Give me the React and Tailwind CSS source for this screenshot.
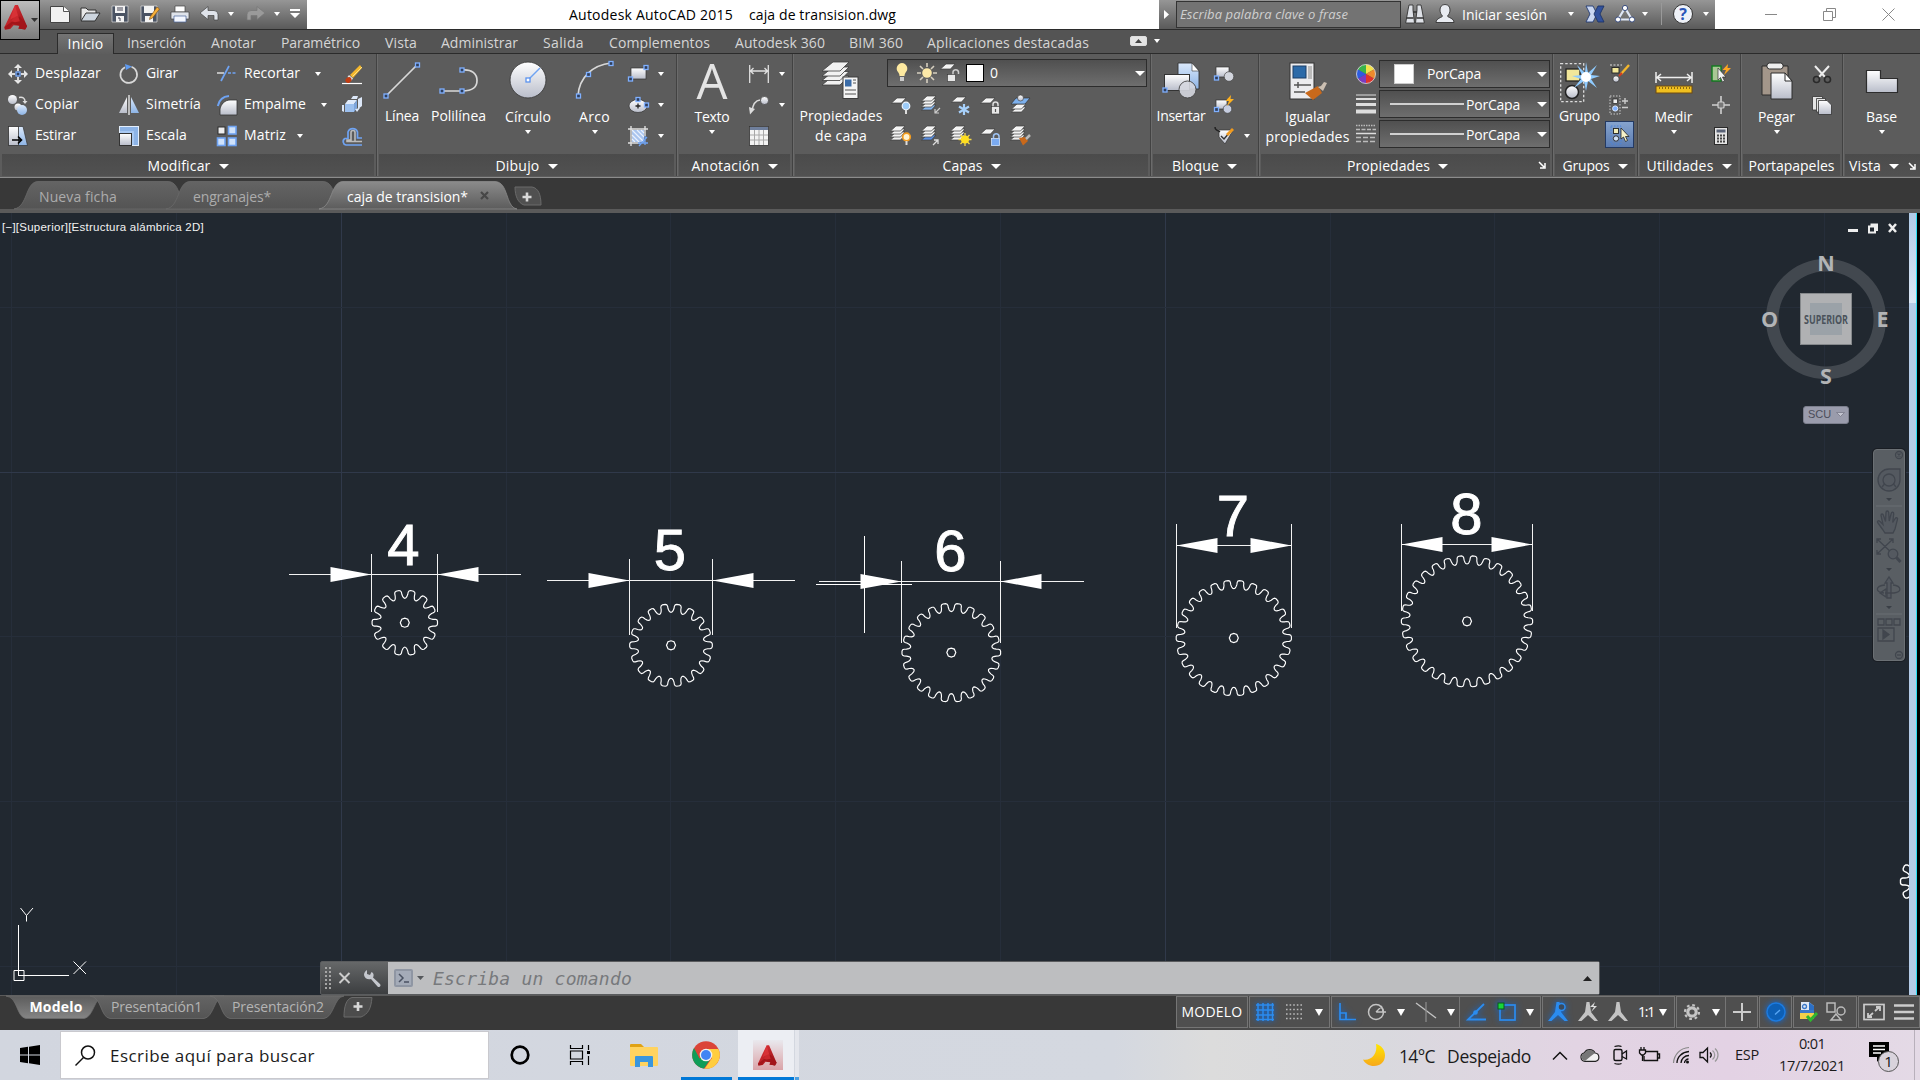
import React, { useLayoutEffect, useRef, useState } from "react";

/* Text run whose tracking is adjusted so that it spans `w` pixels. */
function T({ w, className = "", children }) {
  const ref = useRef(null);
  const [ls, setLs] = useState(0);
  useLayoutEffect(() => {
    if (!w) return;
    const n = ref.current.getBoundingClientRect().width;
    setLs((w - n) / String(children).length);
  }, []);
  return (
    <span ref={ref} className={`inline-block shrink-0 whitespace-pre ${className}`} style={{ letterSpacing: `${ls}px` }}>
      {children}
    </span>
  );
}

function Ico({ w = 20, h = 20, className = "", children }) {
  return (
    <svg width={w} height={h} viewBox={`0 0 ${w} ${h}`} className={`block shrink-0 overflow-visible ${className}`} fill="none">
      {children}
    </svg>
  );
}

const Caret = ({ w = 6, h = 4, className = "", fill = "#fff" }) => (
  <Ico w={w} h={h} className={className}>
    <path d={`M0 0H${w}L${w / 2} ${h}Z`} fill={fill} />
  </Ico>
);

const Node = ({ x, y }) => <rect x={x - 2} y={y - 2} width="4" height="4" fill="#2f3f5c" stroke="#7fb0ff" strokeWidth="1.3" />;

const Defs = () => (
  <svg width="0" height="0" className="absolute">
    <defs>
      <linearGradient id="silver" x1="0" y1="0" x2="0" y2="1">
        <stop offset="0" stopColor="#fff" />
        <stop offset="1" stopColor="#b9bdca" />
      </linearGradient>
      <linearGradient id="blue" x1="0" y1="0" x2="0" y2="1">
        <stop offset="0" stopColor="#dbe9fb" />
        <stop offset="1" stopColor="#8db4e6" />
      </linearGradient>
      <linearGradient id="tabOff" x1="0" y1="0" x2="0" y2="1">
        <stop offset="0" stopColor="#646464" />
        <stop offset="1" stopColor="#545454" />
      </linearGradient>
      <linearGradient id="tabOn" x1="0" y1="0" x2="0" y2="1">
        <stop offset="0" stopColor="#8b8b8b" />
        <stop offset="1" stopColor="#5c5c5c" />
      </linearGradient>
      <linearGradient id="tabDn" x1="0" y1="0" x2="0" y2="1">
        <stop offset="0" stopColor="#5c5c5c" />
        <stop offset="1" stopColor="#858585" />
      </linearGradient>
      <linearGradient id="red" x1="0" y1="0" x2="1" y2="1">
        <stop offset="0" stopColor="#e8353b" />
        <stop offset="1" stopColor="#8f0d12" />
      </linearGradient>
      <linearGradient id="moon" x1="0" y1="0" x2="0" y2="1">
        <stop offset="0" stopColor="#ffe600" />
        <stop offset="1" stopColor="#f7a81b" />
      </linearGradient>
    </defs>
  </svg>
);

const LogoA = ({ w = 24, h = 26 }) => (
  <svg width={w} height={h} viewBox="0 0 24 26" className="block shrink-0">
    <path d="M11 0h3l9.500 22-2 3.500-7-1 1-3-6-.5-3.500 4-5.500.5L0 23Z" fill="url(#red)" />
    <path d="M0 23 14 13l2-1 7.500 10-2 3.500-7-1 2-3-8-2-4 5.500-4 .5Z" fill="#a3151a" />
    <path d="M7 17 13 8l3 9-5 1Z" fill="#c9272c" />
    <path d="M11 0 6 15l8-4Z" fill="#e0383c" opacity=".7" />
  </svg>
);

/* ---------- small ribbon icons ---------- */
const Sheet = ({ x = 0, y = 0, f = "#f4f4f4" }) => (
  <path d={`M${x + 5} ${y}h9l-4.500 5h-10Z`} fill={f} stroke="#3c3c3c" strokeWidth=".7" />
);
const Stack = ({ x = 0, y = 0, last = "#f0f0f0" }) => (
  <>
    <Sheet x={x} y={y + 9} f={last} />
    <Sheet x={x} y={y + 6} />
    <Sheet x={x} y={y + 3} />
    <Sheet x={x} y={y} />
  </>
);

const I = {
  move: (
    <Ico>
      <path d="M10 0l4 4H6ZM10 20l-4-4h8ZM0 10l4-4v8ZM20 10l-4 4V6Z" fill="#e8e8e8" />
      <path d="M10 3v14M3 10h14" stroke="#d8d8d8" strokeWidth="2" />
      <rect x="7" y="7" width="6" height="6" fill="#555" />
      <Node x={10} y={10} />
    </Ico>
  ),
  copy: (
    <Ico>
      <circle cx="4.500" cy="4.500" r="4.500" fill="url(#silver)" />
      <circle cx="10" cy="12" r="3.500" fill="url(#silver)" />
      <circle cx="14" cy="15" r="5" fill="url(#blue)" />
      <path d="M11 2.500c4-1 6 1 6 4" stroke="#ddd" strokeWidth="1.500" />
      <path d="M14.500 6h5L17 9Z" fill="#ddd" />
    </Ico>
  ),
  stretch: (
    <Ico>
      <path d="M9 .5h6l4.500 19H9Z" fill="url(#blue)" stroke="#333" strokeWidth=".7" />
      <rect x=".5" y=".5" width="10" height="19" fill="url(#silver)" stroke="#333" strokeWidth=".8" />
      <path d="M4 14h9m-3-3.500 3.500 3.500-3.500 3.500" stroke="#000" strokeWidth="1.600" />
    </Ico>
  ),
  rotate: (
    <Ico>
      <path d="M12.500 2.800A8.300 8.300 0 1 1 6 3.200" stroke="#d8d8d8" strokeWidth="1.700" />
      <path d="M6 0l7 2.500L7 6Z" fill="#5f9bf0" />
    </Ico>
  ),
  mirror: (
    <Ico>
      <path d="M8 2v16H0Z" fill="url(#silver)" />
      <path d="M12 2v16h8Z" fill="url(#blue)" />
      <path d="M10 0v20" stroke="#ddd" strokeWidth="1.500" />
    </Ico>
  ),
  scale: (
    <Ico>
      <rect x=".5" y=".5" width="19" height="19" fill="#a9c9f2" stroke="#e3eefc" />
      <path d="M1 1h18v18h-4V5H1Z" fill="#7ba6df" opacity=".6" />
      <rect x=".5" y="7.500" width="12" height="12" fill="url(#silver)" stroke="#333" />
    </Ico>
  ),
  trim: (
    <Ico>
      <path d="M0 9h7" stroke="#ddd" strokeWidth="1.500" />
      <path d="M11 9h9" stroke="#6fa3f2" strokeWidth="1.500" strokeDasharray="3 1.500" />
      <path d="M4 17 12 2" stroke="#6fa3f2" strokeWidth="1.700" />
    </Ico>
  ),
  fillet: (
    <Ico>
      <path d="M3 20V14C4 9 8 5 13 5h7v15Z" fill="url(#silver)" stroke="#333" strokeWidth=".8" />
      <path d="M.8 11C2 5 6 1.500 12 1" stroke="#6fa3f2" strokeWidth="2" />
    </Ico>
  ),
  array: (
    <Ico>
      <rect x="1" y="1" width="7" height="7" fill="#eee" stroke="#2c2c2c" />
      {[[11.5, 0.5], [0.5, 12], [11.5, 12]].map(([x, y]) => (
        <rect key={x + "-" + y} x={x} y={y} width="7.500" height="7.500" fill="#cfe2fb" stroke="#6fa3f2" strokeWidth="1.600" />
      ))}
    </Ico>
  ),
  erase: (
    <Ico>
      <path d="M0 19.500h20" stroke="#fff" strokeWidth="1.200" />
      <path d="M8 11 18 1l2 3L11 14Z" fill="#f5b72c" />
      <path d="M10.500 12.500 20 3" stroke="#fbe18a" strokeWidth="1" />
      <path d="M7 11l4 3.500-1.500 2-4-3.500Z" fill="#e9e9e9" />
      <ellipse cx="6.500" cy="16" rx="3.200" ry="2.600" transform="rotate(-35 6.500 16)" fill="#c23c12" />
    </Ico>
  ),
  explode: (
    <Ico>
      <path d="M3 9l3-4h9l-3 4Z" fill="#dfeafb" />
      <path d="M3 9h9v8H3Z" fill="#9bbfee" />
      <path d="M12 9l3-4v8l-3 4Z" fill="#7ca5dd" />
      <path d="M0 10h2v7l-2-1ZM9 4l2-3h5l-1 3ZM16 4l4-2v9l-4 3ZM13 14l5-1-3 4Z" fill="#dce7f8" />
    </Ico>
  ),
  offset: (
    <Ico>
      <path d="M20 19H4a3.500 3.500 0 0 1-1-6.500h3V6a5 5 0 0 1 9.500 0v6h4.500" stroke="#6fa3f2" strokeWidth="1.700" />
      <path d="M20 15.500H5V14h4V6.500a2 2 0 0 1 4 0V15" stroke="#bbb" strokeWidth="1.600" />
    </Ico>
  ),
  rect: (
    <Ico>
      <rect x="3" y="4" width="15" height="11" fill="url(#silver)" stroke="#333" strokeWidth=".7" />
      <Node x={18} y={3.5} />
      <Node x={2.5} y={15} />
    </Ico>
  ),
  ellipse: (
    <Ico>
      <ellipse cx="10" cy="11" rx="9" ry="6.500" fill="url(#silver)" stroke="#333" strokeWidth=".7" />
      <path d="M10 8.500v5M7.500 11h5" stroke="#222" strokeWidth="1.300" />
      <Node x={10} y={4.5} />
      <Node x={18.5} y={10} />
    </Ico>
  ),
  hatch: (
    <Ico>
      <rect x="4" y="4" width="12" height="12" fill="#a9c4ee" />
      <path d="M4 4 16 16M4 9l7 7M9 4l7 7M4 13l3 3M13 4l3 3" stroke="#e9f1fd" strokeWidth="1.200" />
      <path d="M0 3h20M0 17h12M3 0v20M17 0v10" stroke="#e0e0e0" strokeWidth="1.400" />
      <path d="M10 17h10M17 10v9M11 20l8-9" stroke="#6fa3f2" strokeWidth="1.300" />
    </Ico>
  ),
  dim: (
    <Ico>
      <path d="M.7 1v18M19.300 1v18M1 7h18M4.500 4 1.500 7l3 3M15.500 4l3 3-3 3" stroke="#e0e0e0" strokeWidth="1.300" />
    </Ico>
  ),
  leader: (
    <Ico>
      <path d="M3 16C4 9 6 5.500 11 5" stroke="#ddd" strokeWidth="1.500" />
      <path d="M0 12l1 7.500L6 14Z" fill="#ddd" />
      <circle cx="15.500" cy="5.500" r="4" fill="url(#silver)" stroke="#333" strokeWidth=".6" />
    </Ico>
  ),
  table: (
    <Ico>
      <rect x=".5" y=".5" width="19" height="19" fill="#f3f3f3" stroke="#333" strokeWidth=".8" />
      <rect x="1" y="1" width="18" height="3" fill="#6f7f9c" />
      <path d="M1 9h18M1 14h18M5.500 4v15M10 4v15M14.500 4v15" stroke="#a8a8a8" />
    </Ico>
  ),
  layOff: (
    <Ico>
      <Sheet x={1} y={3} />
      <circle cx="15" cy="11" r="3.800" fill="#9ccbf8" stroke="#eef6ff" strokeWidth="1.200" />
      <path d="M15 15v4" stroke="#ddd" strokeWidth="2" />
    </Ico>
  ),
  layIso: (
    <Ico>
      <Stack x={1} y={1} last="#86b6ee" />
      <path d="M19 13l-5 5m0-4v4h4" stroke="#ccc" strokeWidth="1.200" />
    </Ico>
  ),
  layFreeze: (
    <Ico>
      <Sheet x={1} y={2} />
      <path d="M13 9v11M8 11.500l10 6M8 17.500l10-6" stroke="#a7d0fa" strokeWidth="2.200" />
    </Ico>
  ),
  layLock: (
    <Ico>
      <Sheet x={0} y={3} />
      <path d="M12 12V9.500a2.500 2.500 0 0 1 5 0V12" stroke="#ddd" strokeWidth="1.500" />
      <rect x="10.500" y="11.500" width="8" height="7.500" fill="#e8e8e8" stroke="#333" strokeWidth=".6" />
      <path d="M14.500 14v3" stroke="#555" strokeWidth="1.200" />
    </Ico>
  ),
  layMake: (
    <Ico>
      <Sheet x={1} y={12} />
      <Sheet x={1} y={9} />
      <path d="M5 3h14l-5 6H0Z" fill="#7db0ec" stroke="#333" strokeWidth=".7" />
      <circle cx="9.500" cy="3" r="3" fill="url(#silver)" stroke="#333" strokeWidth=".6" />
    </Ico>
  ),
  layOn: (
    <Ico>
      <Stack />
      <circle cx="15.500" cy="11" r="3.800" fill="#fff3d0" stroke="#f39c1f" strokeWidth="1.700" />
      <path d="M15.500 15v4" stroke="#ddd" strokeWidth="2" />
    </Ico>
  ),
  layUniso: (
    <Ico>
      <Stack x={1} last="#5b8fe0" />
      <path d="M12 19l5-5m-4 0h4v4" stroke="#ddd" strokeWidth="1.300" />
    </Ico>
  ),
  layThaw: (
    <Ico>
      <Stack />
      <path d="M14 7v13M7.500 13.500h13M9.500 9l9 9M18.500 9l-9 9" stroke="#f6d94a" strokeWidth="1.300" />
      <circle cx="14" cy="13.500" r="4" fill="#ffdf1f" />
    </Ico>
  ),
  layUnlock: (
    <Ico>
      <Sheet x={0} y={3} />
      <path d="M12.500 12V10a2.800 2.800 0 0 1 5.500 0v2" stroke="#9fc4f5" strokeWidth="1.500" />
      <rect x="10.500" y="12.500" width="8" height="7" fill="#7aaaf0" stroke="#cfe2fb" strokeWidth=".8" />
    </Ico>
  ),
  layMatch: (
    <Ico>
      <Stack />
      <path d="M8 12l6-1 3 4-5 4.500Z" fill="#c9691b" />
      <path d="M15 13l4-4" stroke="#b9b9b9" strokeWidth="2.500" />
    </Ico>
  ),
  blkCreate: (
    <Ico>
      <rect x="2" y="3" width="13" height="10" fill="url(#silver)" stroke="#333" strokeWidth=".7" />
      <circle cx="15" cy="12.500" r="4.800" fill="#d2d5dd" stroke="#444" strokeWidth=".7" />
      <Node x={2.5} y={14} />
    </Ico>
  ),
  blkEdit: (
    <Ico>
      <rect x="2" y="5" width="11" height="9" fill="url(#silver)" stroke="#333" strokeWidth=".7" />
      <circle cx="13.500" cy="14" r="4.300" fill="#c6cde0" stroke="#444" strokeWidth=".7" />
      <Node x={2.5} y={14.5} />
      <path d="M17 0 11.500 6H15l-2 5L20 4h-3.500Z" fill="#ffb21f" />
    </Ico>
  ),
  blkAttr: (
    <Ico>
      <path d="M5 4h11l2 2-7 12-6-7Z" fill="url(#silver)" stroke="#333" strokeWidth=".7" />
      <path d="M1 1c0 4 3 3 5 5" stroke="#222" strokeWidth="1.400" />
      <path d="M7 10l3 3 6-7" stroke="#333" strokeWidth="1.400" />
      <path d="M12 8l6-6 2 2-6 6Z" fill="#f19a1d" />
    </Ico>
  ),
  grpEdit: (
    <Ico>
      <path d="M1 1h12" stroke="#ddd" strokeDasharray="2 1.500" />
      <rect x="3" y="3.500" width="7" height="5.500" fill="#f2e79a" stroke="#222" strokeWidth=".9" />
      <circle cx="7" cy="15" r="3.200" fill="url(#silver)" stroke="#222" strokeWidth=".7" />
      <path d="M12 10 20 1" stroke="#f2b62c" strokeWidth="2.400" />
      <path d="M10 12l3-3" stroke="#d33b1e" strokeWidth="2" />
    </Ico>
  ),
  grpAdd: (
    <Ico>
      <rect x="1" y="1" width="10" height="18" stroke="#ccc" strokeDasharray="1.500 1.500" />
      <rect x="4" y="4" width="4.500" height="4.500" fill="#eee" stroke="#222" strokeWidth=".7" />
      <circle cx="6.200" cy="13.500" r="2.600" fill="#7fb0ff" stroke="#dce9fc" />
      <path d="M13 6h6M16 3v6M13 12.500h6" stroke="#ccc" strokeWidth="1.400" />
    </Ico>
  ),
  grpSel: (
    <Ico>
      <rect x="1" y="1" width="10" height="18" stroke="#4b82d8" strokeDasharray="1.500 1.500" />
      <rect x="3.500" y="3.500" width="5" height="5" fill="#f2eeb9" stroke="#222" strokeWidth=".9" />
      <circle cx="6" cy="13.500" r="2.700" fill="#cfe0f7" stroke="#222" strokeWidth=".9" />
      <path d="M11 3v11l2.500-2 2 4.500 2-1-2-4h3.500Z" fill="#f7f3ca" stroke="#222" strokeWidth=".8" />
    </Ico>
  ),
  selAll: (
    <Ico>
      <rect x="1" y="2" width="9" height="15" fill="#a9c795" stroke="#0f7a1d" strokeWidth="1.400" />
      <path d="M7 4v12l2.500-2.500 2 4.500 2-1-2-4h3.500Z" fill="#f1f1f1" stroke="#333" strokeWidth=".7" />
      <path d="M17 0 11.500 6H15l-2 5L20 4h-3.500Z" fill="#ffa51f" />
    </Ico>
  ),
  point: (
    <Ico>
      <path d="M10 1v18M1 10h18" stroke="#d0d0d0" strokeWidth="1.600" />
      <rect x="7" y="7" width="6" height="6" rx="1" stroke="#d0d0d0" strokeWidth="1.200" fill="#777" />
    </Ico>
  ),
  calc: (
    <Ico>
      <rect x="3.500" y="1.500" width="13" height="17" fill="#e4e4e4" stroke="#2b2b2b" />
      <rect x="5.500" y="3.500" width="9" height="3" fill="#5a6377" />
      <path d="M6 9.500h8.500M6 12.500h8.500M6 15.500h8.500" stroke="#444" strokeWidth="1.800" strokeDasharray="2 1" />
    </Ico>
  ),
  cut: (
    <Ico>
      <path d="M3 2l10 11M17 2 7 13" stroke="#eee" strokeWidth="2" />
      <circle cx="4.500" cy="15.500" r="3" stroke="#2a2a2a" strokeWidth="1.600" />
      <circle cx="15.500" cy="15.500" r="3" stroke="#2a2a2a" strokeWidth="1.600" />
    </Ico>
  ),
  copyDoc: (
    <Ico>
      <path d="M.5 1.500h10V15H.5Z" fill="#e4e4e4" stroke="#333" strokeWidth=".8" />
      <path d="M4.500 3.500h9V17h-9Z" fill="#e4e4e4" stroke="#333" strokeWidth=".8" />
      <path d="M6.500 5.500H15l4.500 4.500v9.500h-13Z" fill="url(#silver)" stroke="#333" strokeWidth=".8" />
    </Ico>
  ),
};

/* ---------- large ribbon icons ---------- */
const B = {
  line: (
    <Ico w={38} h={38}>
      <path d="M3 34 34 3" stroke="#d8d8d8" strokeWidth="1.700" />
      <Node x={3} y={34} />
      <Node x={34.5} y={3} />
    </Ico>
  ),
  poly: (
    <Ico w={38} h={38}>
      <path d="M2 29h21M22 8c10-1 15 4 15 10.500S33 29 22 29" stroke="#d8d8d8" strokeWidth="1.700" />
      <Node x={2} y={29} />
      <Node x={22} y={29} />
      <Node x={22} y={8} />
    </Ico>
  ),
  circle: (
    <Ico w={38} h={38}>
      <circle cx="19" cy="18" r="18" fill="url(#silver)" stroke="#3a3a3a" strokeWidth=".9" />
      <path d="M19 18 31 6" stroke="#6fa3f2" strokeWidth="1.500" />
      <rect x="17" y="16" width="4" height="4" fill="#fff" stroke="#5b93ee" strokeWidth="1.300" />
    </Ico>
  ),
  arc: (
    <Ico w={38} h={38}>
      <path d="M2 34C3 15 17 3 35 1" stroke="#d8d8d8" strokeWidth="1.700" />
      <Node x={2.5} y={34} />
      <Node x={12.5} y={12.5} />
      <Node x={35} y={1.5} />
    </Ico>
  ),
  layers: (
    <Ico w={38} h={38}>
      {[14, 9.5, 5, 0].map((y) => (
        <path key={y} d={`M11 ${y}h16l-9 9H0Z`} fill="#f1f1f1" stroke="#3c3c3c" strokeWidth=".8" />
      ))}
      <rect x="21" y="15" width="15" height="21.500" fill="#f4f4f4" stroke="#3c3c3c" />
      <rect x="23" y="17.500" width="6.500" height="7" fill="#3a6ca8" />
      <path d="M31 18h3M31 21h3M23 28h11M23 32h11" stroke="#888" strokeWidth="1.300" />
    </Ico>
  ),
  insert: (
    <Ico w={38} h={38}>
      <path d="M16 1h14l7 8v18H16Z" fill="url(#blue)" stroke="#333" strokeWidth=".9" />
      <path d="M30 1v8h7Z" fill="#fff" stroke="#333" strokeWidth=".6" />
      <rect x="2.500" y="12.500" width="25" height="16" fill="url(#silver)" stroke="#333" />
      <circle cx="25.500" cy="27.500" r="8.500" fill="#d5d7df" fillOpacity=".9" stroke="#444" strokeWidth=".9" />
      <Node x={3} y={28} />
    </Ico>
  ),
  match: (
    <Ico w={38} h={38}>
      <rect x="1" y="1" width="24" height="36" fill="#ececee" stroke="#333" />
      <rect x="4" y="4" width="13" height="12" fill="#2c6aa8" stroke="#1d3e66" />
      <path d="M19 4h4v13h-4Z" fill="#bbb" />
      <path d="M5 23h17M5 30h11M9 20v6" stroke="#555" strokeWidth="1.500" />
      <path d="M16 31l13-7 4 7-9 7Z" fill="#c9691b" />
      <path d="M29 25l5 4 4-8-3-1-3 4Z" fill="#cbbfb2" />
    </Ico>
  ),
  group: (
    <Ico w={40} h={42}>
      <rect x=".7" y="1.700" width="23" height="38" stroke="#ddd" strokeWidth="1.300" strokeDasharray="2.500 2" />
      <rect x="6" y="7" width="14" height="12" fill="#f2e79a" stroke="#222" strokeWidth="1.300" />
      <circle cx="12" cy="30" r="6.500" fill="url(#silver)" stroke="#222" strokeWidth="1.500" />
      <path d="M26 0l2 11 9-8-6 10 9 1-9 3 6 9-9-7-2 10-2-10-10 7 7-9-9-3 10-1-5-10 8 8Z" fill="#8fcbff" />
      <circle cx="26" cy="15" r="5" fill="#fff" />
    </Ico>
  ),
  measure: (
    <Ico w={38} h={38}>
      <path d="M1 10v11M37 10v11M2 15.500h34M6 12l-4 3.500L6 19M32 12l4 3.500-4 3.500" stroke="#eee" strokeWidth="1.500" />
      <rect x="1" y="24" width="36" height="7" fill="#f0c020" stroke="#6e4a10" />
      <path d="M4 26h31" stroke="#8d6a10" strokeWidth="2" strokeDasharray="1 2" />
    </Ico>
  ),
  paste: (
    <Ico w={32} h={38}>
      <path d="M1 4h26v29H1Z" fill="#a3968a" stroke="#2d2d2d" />
      <rect x="6" y="1" width="16" height="6" rx="2.500" fill="#eee" stroke="#2d2d2d" />
      <path d="M10 11h14l7 8v18H10Z" fill="url(#silver)" stroke="#2d2d2d" />
      <path d="M24 11v8h7Z" fill="#fff" stroke="#2d2d2d" />
    </Ico>
  ),
  base: (
    <Ico w={34} h={38}>
      <path d="M1.500 8.500h14v8h17v14h-31Z" fill="url(#silver)" stroke="#2d2d2d" strokeWidth="1.200" />
    </Ico>
  ),
};

/* ---------- ribbon building blocks ---------- */
const Panel = ({ className, title, tw, arrow, caret = true, children }) => (
  <section className={`flex h-[122px] shrink-0 flex-col border-r border-[#424242] shadow-[1px_0_0_#6b6b6b] ${className}`}>
    <div className="flex h-[100px] pt-[4px]">{children}</div>
    <div className="relative mx-[2px] flex h-[22px] items-center justify-center gap-2 bg-gradient-to-b from-[#4b4b4b] to-[#515151] pt-[2px]">
      <T w={tw}>{title}</T>
      {caret && <Caret w={10} h={5} />}
      {arrow && (
        <Ico w={7} h={7} className="absolute right-[4px] top-[8px]">
          <path d="M0 0l5 5M6 1v5H1" stroke="#fff" strokeWidth="1.500" />
        </Ico>
      )}
    </div>
  </section>
);

const Big = ({ className, icon, lines, caret, low }) => (
  <div className={`flex shrink-0 flex-col items-center pt-[4px] ${className}`}>
    <div className="flex h-[39px] items-start">{icon}</div>
    <div className={`flex flex-col items-center leading-[20px] ${caret || low ? "pt-[6px]" : "pt-[5px]"}`}>
      {lines.map(([t, w]) => (
        <T key={t} w={w} className="h-[20px]">{t}</T>
      ))}
    </div>
    {caret && <Caret className="mt-[3px]" />}
  </div>
);

const Tool = ({ icon, label, w, caret }) => (
  <div className="flex h-[31px] items-center">
    {icon}
    {label && <T w={w} className="ml-[7px] pb-[1px]">{label}</T>}
    {caret && <Caret className={caret} />}
  </div>
);

const Combo = ({ className, children }) => (
  <div className={`flex h-[28px] items-center border border-[#2c2c2c] bg-gradient-to-b from-[#505050] to-[#6e6e6e] ${className}`}>{children}</div>
);

const Ribbon = () => (
  <div className="flex h-[124px] border-b border-[#8c8c8c] bg-[#5c5c5c] text-[14px] leading-[20px] text-white">
    <Panel className="w-[377px]" title="Modificar" tw={63}>
      <div className="grid w-full grid-cols-[111px_98px_125px_20px] content-start pl-[8px]">
        <Tool icon={I.move} label="Desplazar" w={66} />
        <Tool icon={I.rotate} label="Girar" w={32} />
        <Tool icon={I.trim} label="Recortar" w={56} caret="ml-[15px]" />
        <Tool icon={I.erase} />
        <Tool icon={I.copy} label="Copiar" w={44} />
        <Tool icon={I.mirror} label="Simetría" w={55} />
        <Tool icon={I.fillet} label="Empalme" w={62} caret="ml-[15px]" />
        <Tool icon={I.explode} />
        <Tool icon={I.stretch} label="Estirar" w={41} />
        <Tool icon={I.scale} label="Escala" w={41} />
        <Tool icon={I.array} label="Matriz" w={42} caret="ml-[11px]" />
        <Tool icon={I.offset} />
      </div>
    </Panel>
    <Panel className="w-[300px]" title="Dibujo" tw={44}>
      <Big className="w-[50px]" icon={B.line} lines={[["Línea", 34]]} />
      <Big className="w-[62px] pl-px" icon={B.poly} lines={[["Polilínea", 55]]} />
      <Big className="w-[78px]" icon={B.circle} lines={[["Círculo", 46]]} caret />
      <Big className="w-[54px] pl-px" icon={B.arc} lines={[["Arco", 31]]} caret />
      <div className="pl-[7px]">
        <Tool icon={I.rect} caret="ml-[10px]" />
        <Tool icon={I.ellipse} caret="ml-[10px]" />
        <Tool icon={I.hatch} caret="ml-[10px]" />
      </div>
    </Panel>
    <Panel className="w-[116px]" title="Anotación" tw={68}>
      <Big
        className="w-[70px]"
        icon={<span className="font-['Open_Sans'] text-[49px] leading-[37px] text-[#e4e4e4]">A</span>}
        lines={[["Texto", 35]]}
        caret
      />
      <div className="pl-[2px]">
        <Tool icon={I.dim} caret="ml-[10px]" />
        <Tool icon={I.leader} caret="ml-[10px]" />
        <Tool icon={I.table} />
      </div>
    </Panel>
    <Panel className="w-[358px]" title="Capas" tw={40}>
      <Big className="w-[94px] pl-[2px]" icon={B.layers} lines={[["Propiedades", 83], ["de capa", 52]]} />
      <div>
        <Combo className="mt-[1px] w-[260px]">
          <Ico w={14} h={22} className="ml-[7px]">
            <path d="M7 1a5.500 5.500 0 0 1 4 9c-1 1.500-1.500 2.500-1.500 4h-5c0-1.500-.5-2.500-1.500-4A5.500 5.500 0 0 1 7 1Z" fill="#fde9a0" />
            <path d="M5 15h4v4H5Z" fill="#ccc" />
          </Ico>
          <Ico w={20} h={20} className="ml-[8px]">
            <path d="M10 0v4M10 16v4M0 10h4M16 10h4M3 3l3 3M14 14l3 3M17 3l-3 3M6 14l-3 3" stroke="#d6cfc0" strokeWidth="1.600" />
            <circle cx="10" cy="10" r="4.800" fill="#fde9a8" />
          </Ico>
          <Ico w={20} h={20} className="ml-[3px]">
            <Sheet x={1} y={1} />
            <path d="M13 12V9a2.800 2.800 0 0 1 5.500 0v2" stroke="#ccc" strokeWidth="1.500" />
            <rect x="7.500" y="11.500" width="8" height="7" fill="#e8e8e8" stroke="#333" strokeWidth=".6" />
          </Ico>
          <span className="ml-[6px] h-[18px] w-[18px] border border-black bg-white" />
          <span className="ml-[6px]">0</span>
          <Caret w={10} h={5} className="ml-auto mr-[1px]" />
        </Combo>
        <div className="grid grid-cols-[30px_30px_30px_30px_30px] pl-[4px] pt-[2px]">
          {["layOff", "layIso", "layFreeze", "layLock", "layMake", "layOn", "layUniso", "layThaw", "layUnlock", "layMatch"].map((k) => (
            <Tool key={k} icon={I[k]} />
          ))}
        </div>
      </div>
    </Panel>
    <Panel className="w-[108px]" title="Bloque" tw={47}>
      <Big className="w-[60px]" icon={B.insert} lines={[["Insertar", 49]]} />
      <div className="pl-[3px]">
        <Tool icon={I.blkCreate} />
        <Tool icon={I.blkEdit} />
        <Tool icon={I.blkAttr} caret="ml-[10px]" />
      </div>
    </Panel>
    <Panel className="w-[294px] [&>div:last-child]:pr-[16px]" title="Propiedades" tw={83} arrow>
      <Big className="w-[97px]" icon={B.match} lines={[["Igualar", 45], ["propiedades", 84]]} low />
      <div className="flex w-[23px] flex-col items-start gap-[10px] pt-[6px]">
        <Ico>
          {["#f3e24a", "#f08a2c", "#e0332b", "#7a3bc0", "#2d5be0", "#38b34a"].map((c, i) => {
            const a = ((i * 60 - 90) * Math.PI) / 180;
            const b = ((i * 60 - 30) * Math.PI) / 180;
            return <path key={c} d={`M10 10L${10 + 9.5 * Math.cos(a)} ${10 + 9.5 * Math.sin(a)}A9.500 9.500 0 0 1 ${10 + 9.5 * Math.cos(b)} ${10 + 9.5 * Math.sin(b)}Z`} fill={c} />;
          })}
          <circle cx="10" cy="10" r="9.500" stroke="#ddd" strokeWidth=".8" />
        </Ico>
        <Ico>
          <path d="M0 1h20" stroke="#ddd" />
          <path d="M0 5h20" stroke="#ddd" strokeWidth="2" />
          <path d="M0 10.500h20" stroke="#ddd" strokeWidth="3" />
          <path d="M0 17.500h20" stroke="#ddd" strokeWidth="4" />
        </Ico>
        <Ico>
          <path d="M0 1.500h20" stroke="#bbb" strokeWidth="1.500" strokeDasharray="1.500 1" />
          <path d="M0 5.500h20" stroke="#bbb" strokeWidth="1.500" strokeDasharray="4 1.500" />
          <path d="M0 9.500h20" stroke="#ddd" strokeWidth="1.500" />
          <path d="M0 13.500h20M0 17.500h20" stroke="#bbb" strokeWidth="1.500" strokeDasharray="5 2" />
        </Ico>
      </div>
      <div className="flex flex-col gap-[2px] pt-[2px]">
        <Combo className="w-[171px]">
          <span className="ml-[14px] h-[20px] w-[20px] border border-[#ccc] bg-white" />
          <T w={54} className="ml-[13px]">PorCapa</T>
          <Caret w={10} h={5} className="ml-auto mr-[2px]" />
        </Combo>
        {[0, 1].map((k) => (
          <Combo key={k} className="w-[171px]">
            <span className="ml-[10px] h-[2px] w-[74px] bg-[#d0d0d0]" />
            <T w={54} className="ml-[2px] pt-px">PorCapa</T>
            <Caret w={10} h={5} className="ml-auto mr-[2px]" />
          </Combo>
        ))}
      </div>
    </Panel>
    <Panel className="w-[85px]" title="Grupos" tw={47}>
      <Big className="w-[52px] pl-px" icon={B.group} lines={[["Grupo", 41]]} />
      <div>
        <div className="pl-[4px]">
          <Tool icon={I.grpEdit} />
          <Tool icon={I.grpAdd} />
        </div>
        <div className="mt-[1px] flex h-[27px] w-[29px] items-center justify-center border border-[#243a63] bg-gradient-to-b from-[#86a4cf] to-[#5c7cb0]">{I.grpSel}</div>
      </div>
    </Panel>
    <Panel className="w-[103px]" title="Utilidades" tw={67}>
      <Big className="w-[71px]" icon={B.measure} lines={[["Medir", 38]]} caret />
      <div className="pl-[2px]">
        <Tool icon={I.selAll} />
        <Tool icon={I.point} />
        <Tool icon={I.calc} />
      </div>
    </Panel>
    <Panel className="w-[102px]" title="Portapapeles" tw={86} caret={false}>
      <Big className="w-[71px]" icon={B.paste} lines={[["Pegar", 37]]} caret />
      <div>
        <Tool icon={I.cut} />
        <Tool icon={I.copyDoc} />
      </div>
    </Panel>
    <section className="flex h-[122px] w-[77px] flex-col">
      <div className="flex h-[100px] pt-[4px]">
        <Big className="w-[77px]" icon={B.base} lines={[["Base", 31]]} caret />
      </div>
      <div className="ml-[2px] flex h-[22px] items-center bg-gradient-to-b from-[#4b4b4b] to-[#515151] pl-[4px] pt-[2px]">
        <T w={32}>Vista</T>
        <Caret w={10} h={5} className="ml-[8px]" />
        <Ico w={7} h={7} className="ml-[10px]">
          <path d="M0 0l5 5M6 1v5H1" stroke="#fff" strokeWidth="1.500" />
        </Ico>
      </div>
    </section>
  </div>
);

/* ---------- title bar ---------- */
const TitleBar = () => (
  <header className="flex h-[29px] bg-white text-[14px] leading-[20px]">
    <div className="flex h-[29px] w-[307px] items-center bg-gradient-to-b from-[#969696] to-[#5a5a5a] pl-[50px] pb-[2px]">
      <Ico w={20} h={18}>
        <path d="M.5 1.500h13l6 5v11H.5Z" fill="#f1f1f1" stroke="#444" />
        <path d="M13.500 1.500v5h6" fill="#fff" stroke="#555" />
      </Ico>
      <Ico w={21} h={18} className="ml-[10px]">
        <path d="M1 15V3h5l2 2h8v4" fill="#e8e8e8" stroke="#333" />
        <path d="M1 16 6 8h14l-5 8Z" fill="#cdd5de" stroke="#333" />
      </Ico>
      <Ico w={18} h={18} className="ml-[10px]">
        <path d="M1 1h16v16H1Z" fill="#4a5363" stroke="#eee" strokeWidth=".6" />
        <path d="M4 1h10v7H4ZM5 11h8v6H5Z" fill="#f3f3f3" />
        <path d="M6 3h6M6 5h6M7 13h2v3" stroke="#445" />
      </Ico>
      <Ico w={20} h={18} className="ml-[11px]">
        <path d="M1 1h16v16H1Z" fill="#4a5363" stroke="#eee" strokeWidth=".6" />
        <path d="M4 1h10v7H4ZM5 11h8v6H5Z" fill="#f3f3f3" />
        <path d="M10 12 17 2l2.500 2-7 9-3 1.500Z" fill="#f7b03a" stroke="#7b4a10" strokeWidth=".6" />
      </Ico>
      <Ico w={20} h={18} className="ml-[10px]">
        <path d="M5 1h10v6H5Z" fill="#fff" stroke="#444" strokeWidth=".7" />
        <path d="M1 7h18v7H1Z" fill="#dfe3ea" stroke="#444" strokeWidth=".7" />
        <path d="M4 11h12v6H4Z" fill="#f3f7ff" stroke="#48629a" strokeWidth=".7" />
      </Ico>
      <Ico w={20} h={18} className="ml-[10px]">
        <path d="M0 8 8 1.500v4h6a4 4 0 0 1 4 4V15h-4v-4.500H8v4Z" fill="#dfe3ea" stroke="#444" strokeWidth=".7" />
      </Ico>
      <Caret className="ml-[8px]" />
      <Ico w={20} h={18} className="ml-[12px]">
        <path d="M19 8 11 1.500v4H5a4 4 0 0 0-4 4V15h4v-4.500h6v4Z" fill="#9a9a9a" stroke="#777" strokeWidth=".7" />
      </Ico>
      <Caret className="ml-[8px]" />
      <Ico w={10} h={9} className="ml-[10px]">
        <path d="M0 0h10v2H0ZM0 4h10L5 9Z" fill="#fff" />
      </Ico>
    </div>
    <div className="flex w-[852px] items-center bg-white pl-[262px] text-black">
      <T w={164}>Autodesk AutoCAD 2015</T>
      <T w={147} className="ml-[16px]">caja de transision.dwg</T>
    </div>
    <div className="flex w-[556px] items-center bg-gradient-to-b from-[#969696] to-[#5a5a5a] pb-[1px] text-white">
      <Ico w={5} h={9} className="ml-[5px]">
        <path d="M0 0l5 4.500L0 9Z" fill="#fff" />
      </Ico>
      <div className="ml-[7px] flex h-[27px] w-[225px] items-center border border-[#333] bg-[#737373] pl-[3px] text-[13px] italic text-[#cfcfcf]">
        <T w={168}>Escriba palabra clave o frase</T>
      </div>
      <Ico w={20} h={20} className="ml-[4px]">
        <path d="M4 1h4v5l1.500 13H.7L3 6ZM16 1h-4v5l-1.500 13h8.800L17 6Z" fill="#dfe2e8" stroke="#333" strokeWidth=".9" />
        <path d="M8 8h4M1.500 14h7M11.500 14h7" stroke="#333" strokeWidth="1.500" />
      </Ico>
      <Ico w={20} h={20} className="ml-[10px]">
        <path d="M10 .5c3.500 0 5 2.500 5 5.500 0 2.500-1 4.500-2.500 6 0 1.500 6.500 2 6.500 6.500H1c0-4.500 6.500-5 6.500-6.500C6 10.500 5 8.500 5 6 5 3 6.500.5 10 .5Z" fill="#e8ebf1" stroke="#333" strokeWidth=".9" />
      </Ico>
      <T w={85} className="ml-[7px] pt-px">Iniciar sesión</T>
      <Caret className="ml-[21px]" />
      <Ico w={18} h={18} className="ml-[12px]">
        <path d="M0 1h7l4 8-4 8H0l4-8Z" fill="#c9d7f2" stroke="#233a73" strokeWidth=".9" />
        <path d="M18 1h-6L8 9l4 8h6l-4-8Z" fill="#31519c" stroke="#1e3468" strokeWidth=".9" />
      </Ico>
      <Ico w={20} h={18} className="ml-[11px]">
        <path d="M10 3 3 14.500h14Z" stroke="#dfe7f6" strokeWidth="2.200" />
        <circle cx="10" cy="3" r="2.600" fill="#fff" stroke="#3a4e80" />
        <circle cx="3" cy="14.500" r="2.600" fill="#fff" stroke="#3a4e80" />
        <circle cx="17" cy="14.500" r="2.600" fill="#fff" stroke="#3a4e80" />
      </Ico>
      <Caret className="ml-[7px]" />
      <span className="ml-[13px] h-[22px] w-px bg-[#999]" />
      <span className="ml-[11px] flex h-[20px] w-[20px] items-center justify-center rounded-full border border-[#333] bg-[#eef1f7] text-[16px] font-bold leading-none text-[#2a55b8]">?</span>
      <Caret className="ml-[10px]" />
    </div>
    <div className="flex w-[205px] items-center bg-white pl-[50px] pb-[1px]">
      <span className="h-px w-[12px] bg-[#888]" />
      <Ico w={13} h={13} className="ml-[46px]">
        <path d="M.5 3.500h9v9h-9ZM3.500 3V.5h9v9H10" stroke="#888" />
      </Ico>
      <Ico w={13} h={13} className="ml-[46px]">
        <path d="M.5.5l12 12M12.500.5l-12 12" stroke="#888" />
      </Ico>
    </div>
  </header>
);

const TABS = [
  ["Inserción", 59, "w-[59px] ml-[13px]"],
  ["Anotar", 45, "w-[45px] ml-[25px]"],
  ["Paramétrico", 79, "w-[79px] ml-[25px]"],
  ["Vista", 32, "w-[32px] ml-[25px]"],
  ["Administrar", 77, "w-[77px] ml-[24px]"],
  ["Salida", 41, "w-[41px] ml-[25px]"],
  ["Complementos", 101, "w-[101px] ml-[25px]"],
  ["Autodesk 360", 90, "w-[90px] ml-[25px]"],
  ["BIM 360", 54, "w-[54px] ml-[24px]"],
  ["Aplicaciones destacadas", 162, "w-[162px] ml-[24px]"],
];

const RibbonTabs = () => (
  <nav className="flex h-[25px] items-center border-b border-t border-[#2b2b2b] bg-[#545454] pl-[57px] text-[14px] leading-[20px] text-[#d6d6d6]">
    <div className="mb-[-2px] mt-[2px] flex h-[22px] w-[57px] items-center justify-center border border-b-0 border-[#2b2b2b] bg-gradient-to-b from-[#747474] to-[#5c5c5c] pb-px text-white">
      <T w={36}>Inicio</T>
    </div>
    {TABS.map(([t, w, c]) => (
      <div key={t} className={`flex pt-[2px] ${c}`}>
        <T w={w}>{t}</T>
      </div>
    ))}
    <Ico w={17} h={10} className="mb-[2px] ml-[41px]">
      <rect x=".5" y=".5" width="16" height="9" rx="1.500" fill="#e4e4e4" stroke="#ddd" />
      <path d="M5 7l3.500-4L12 7Z" fill="#444" />
    </Ico>
    <Caret className="mb-[2px] ml-[7px]" />
  </nav>
);

/* ---------- drawing tabs ---------- */
const FileTab = ({ w, on, tw, pl, title, cls }) => (
  <div className={`relative flex h-[28px] items-center pt-[3px] ${cls} ${on ? "text-white" : "text-[#acacac]"}`}>
    <svg width={w} height="28" viewBox={`0 0 ${w} 28`} className="absolute left-0 top-0 overflow-visible">
      <path d={`M-6 28C8 26 5 1 18 .5H${w - 14}C${w} 1 ${w - 4} 26 ${w + 8} 28Z`} fill={on ? "url(#tabOn)" : "url(#tabOff)"} stroke={on ? "#8a8a8a" : "#6a6a6a"} strokeWidth=".8" />
    </svg>
    <T w={tw} className={`relative ${pl}`}>{title}</T>
    {on && (
      <Ico w={9} h={9} className="relative mb-[3px] ml-[12px]">
        <path d="M1 1l7 7M8 1 1 8" stroke="#474747" strokeWidth="2.200" />
      </Ico>
    )}
  </div>
);

const FileTabs = () => (
  <div className="flex h-[35px] flex-col bg-[#383838] text-[14px] leading-[20px]">
    <div className="flex h-[31px] items-end pl-[20px] pt-[3px]">
      <FileTab w={162} tw={78} title="Nueva ficha" pl="ml-[19px]" cls="w-[152px]" />
      <FileTab w={165} tw={78} title="engranajes*" pl="ml-[21px]" cls="w-[153px]" />
      <FileTab w={184} tw={121} title="caja de transision*" pl="ml-[22px]" cls="w-[173px]" on />
      <Ico w={28} h={20} className="mb-[3px] ml-[16px]">
        <path d="M1 1h17c6 1 9 7 9 18H10C4 17 1 10 1 1Z" fill="#505050" stroke="#6a6a6a" />
        <path d="M13 6.500v9M8.500 11h9" stroke="#d8d8d8" strokeWidth="2.600" />
      </Ico>
    </div>
    <div className="h-[4px] bg-[#5a5a5a]" />
  </div>
);

/* ---------- drawing area ---------- */
function gearPath(cx, cy, R, n) {
  const p = (2 * Math.PI) / n;
  const prof = [
    [-0.5, 8.3], [-0.4, 7.8], [-0.33, 6.6], [-0.27, 4.4], [-0.25, 2], [-0.2, 0.6], [-0.1, 0],
    [0.1, 0], [0.2, 0.6], [0.25, 2], [0.27, 4.4], [0.33, 6.6], [0.4, 7.8],
  ];
  const pts = [];
  for (let i = 0; i < n; i++)
    for (const [f, d] of prof) {
      const a = (i + f) * p;
      pts.push(`${(cx + (R - d) * Math.cos(a)).toFixed(1)} ${(cy + (R - d) * Math.sin(a)).toFixed(1)}`);
    }
  return `M${pts.join("L")}Z`;
}

const GEARS = [
  { t: "4", cx: 404.8, cy: 622.7, R: 32.7, n: 14, l: 371.5, r: 437.5, y1: 554, y2: 612, d: 574.5, from: 289, to: 521, tx: 403.5, ty: 565 },
  { t: "5", cx: 671, cy: 645.3, R: 41.3, n: 18, l: 629.5, r: 712.5, y1: 559, y2: 635, d: 580.5, from: 547, to: 795, tx: 669.8, ty: 570 },
  { t: "6", cx: 951.3, cy: 652.6, R: 49.3, n: 22, l: 901.5, r: 1000.5, y1: 561, y2: 643, d: 581.5, from: 819, to: 1084, tx: 950.3, ty: 571 },
  { t: "7", cx: 1233.8, cy: 638, R: 57.6, n: 26, l: 1176.5, r: 1291.5, y1: 524, y2: 628, d: 545.5, tx: 1233, ty: 536 },
  { t: "8", cx: 1467, cy: 621.3, R: 65.6, n: 30, l: 1401.5, r: 1532.5, y1: 524, y2: 611, d: 544.5, tx: 1466.5, ty: 533.5 },
];

const Drawing = () => (
  <svg width="1909" height="782" viewBox="0 213 1909 782" className="block" fill="none">
    {Array.from({ length: 12 }, (_, k) => {
      const x = Math.floor(341.3 + (k - 2) * 164.8) + 0.5;
      const major = (k - 2) % 5 === 0;
      return <path key={"v" + k} d={`M${x} 213V995`} stroke={major ? "#30394a" : "#262e3a"} />;
    })}
    {[307.5, 472.5, 636.5, 801.5, 966.5].map((y) => (
      <path key={y} d={`M0 ${y}H1909`} stroke={y === 472.5 ? "#30394a" : "#262e3a"} />
    ))}
    {GEARS.map((g) => {
      const inside = !g.from;
      const s = inside ? 41 : -41;
      return (
        <g key={g.t}>
          <path d={gearPath(g.cx, g.cy, g.R, g.n)} stroke="#fff" strokeWidth="1.150" />
          <path d={`M${g.cx - 4.5} ${g.cy}l1.500-3.500 3-1 3 1 1.500 3.500-1.500 3.500-3 1-3-1Z`} stroke="#fff" strokeWidth="1.200" />
          <path d={`M${g.l} ${g.y1}V${g.y2}M${g.r} ${g.y1}V${g.y2}M${inside ? g.l : g.from} ${g.d}H${inside ? g.r : g.to}`} stroke="#f2f2f2" />
          <path d={`M${g.l} ${g.d}l${s}-7.500v15ZM${g.r} ${g.d}l${-s}-7.500v15Z`} fill="#fff" />
          <text x={g.tx} y={g.ty} textAnchor="middle" fontSize="58" fill="#fff" stroke="#fff" strokeWidth=".9" fontFamily="Liberation Sans, sans-serif">{g.t}</text>
        </g>
      );
    })}
    <path d="M864.500 536V633M816 584.500H912" stroke="#fff" />
    <path d={gearPath(1933.5, 881.5, 33, 14)} stroke="#fff" strokeWidth="1.400" />
    <path d="M18.500 925v51M18 975.500h51M14 970.500h10v10H14ZM20.500 908l6 7.500v6M33 908l-6.500 7.500M73.500 961.500l12.500 12.500M86 961.500 73.500 974" stroke="#fff" />
  </svg>
);

const Compass = () => (
  <div className="absolute left-[1760px] top-[45px] h-[170px] w-[130px] font-['Open_Sans'] font-bold text-[#b2b4b6]">
    <Ico w={130} h={124}>
      <circle cx="66" cy="61" r="53.800" stroke="#42484f" strokeWidth="12.500" />
      <rect x="40.500" y="35.500" width="51" height="51" fill="#b0b1b3" stroke="#85888b" />
      <rect x="50" y="45" width="32" height="32" fill="#9ba2a8" />
      <text x="66" y="66" textAnchor="middle" fontSize="12" textLength="44" lengthAdjust="spacingAndGlyphs" fill="#4a525b">SUPERIOR</text>
      <g fontSize="21.500" textAnchor="middle" fill="#b2b4b6">
        <text x="66" y="13">N</text>
        <text x="9.500" y="69">O</text>
        <text x="122.500" y="69">E</text>
        <text x="66" y="126">S</text>
      </g>
    </Ico>
    <div className="absolute left-[43px] top-[148px] flex h-[18px] w-[46px] items-center rounded-[3px] border border-[#7c7f8d] bg-[#9a9cac] pb-[2px] pl-[4px] font-['Liberation_Sans'] text-[11px] font-normal leading-none text-[#4b4d5a]">
      SCU
      <Ico w={9} h={5} className="ml-[5px]">
        <path d="M.5.5h8l-4 4Z" fill="#c3c5d0" stroke="#777988" strokeWidth=".8" />
      </Ico>
    </div>
  </div>
);

const NavBar = () => (
  <div className="absolute left-[1873px] top-[236px] flex h-[212px] w-[32px] flex-col items-center rounded-[4px] border border-[#6b7074] bg-[#595e63] shadow-[0_0_0_1px_#191d23]">
    <Ico w={30} h={210}>
      <g stroke="#41464e" strokeWidth="1.300">
        <circle cx="25" cy="5" r="3.500" />
        <path d="M23.500 3.500l3 3M26.500 3.500l-3 3" />
        <path d="M15 19h11v11a11 11 0 1 1-11-11Z" fill="#545960" />
        <circle cx="15" cy="30" r="6" />
        <path d="M10.500 34 8 37M19.500 34l2.500 3" />
        <path d="M9 80 4 73c-1.500-2 .5-3 2-1.500l3 3-2-9c0-2 2-2 2.500 0l2 6 .5-9c0-2 2.500-2 2.700 0l.5 8.500 2-7.500c.5-2 2.700-1.500 2.500.5l-1 8.500 2.500-4c1-1.500 3-.5 2.200 1.200L21 79l-2 4h-8Z" fill="#545960" />
        <path d="M3 89l16 15M19 89 3 104M3 93v-4h4M15 89h4v4M3 100v4h4" />
        <circle cx="19" cy="104" r="4.800" fill="#545960" />
        <path d="M22.500 107.500l4 4.500" strokeWidth="3" />
        <path d="M13 148v-15h-2l4-6 4 6h-2v15Z" fill="#545960" />
        <path d="M11 135c-10 1-10 7-1 8M19 135c9 1 9 7 1 8h-9M12 139v8l-6-4Z" />
        <path d="M4 169h6v6H4ZM12 169h6v6h-6ZM20 169h6v6h-6ZM4 178h16v13H4Z" />
        <path d="M9 180l6 4.500-6 4.500Z" fill="#41464e" />
        <circle cx="25" cy="205" r="3.500" />
        <path d="M23 205h4" />
      </g>
      <path d="M12 48h6l-3 3ZM12 118h6l-3 3ZM12 156h6l-3 3Z" fill="#3a3f46" />
      <path d="M2 56h26M2 164h26" stroke="#6a6f75" />
    </Ico>
  </div>
);

const CommandBar = () => (
  <div className="absolute left-[320px] top-[748px] flex h-[34px] w-[1280px] rounded-[2px] border border-[#5a5c5e] bg-gradient-to-b from-[#666869] to-[#3c3e40]">
    <div className="flex w-[67px] items-center">
      <Ico w={6} h={22} className="ml-[4px]">
        <path d="M1 0v22M5 0v22" stroke="#a5a5a5" strokeWidth="2" strokeDasharray="2 2" />
      </Ico>
      <Ico w={11} h={12} className="ml-[8px]">
        <path d="M.5 1l10 10M10.500 1l-10 10" stroke="#ccc" strokeWidth="2" />
      </Ico>
      <Ico w={18} h={18} className="ml-[13px]">
        <path d="M1 6c0-2 1-4 3-5l0 4 3 1 1.500-3C11 4 11 7 10 8.500l7 6.500c1.500 2-.5 4-2.500 2.500L8 10C5 11 1.500 9.500 1 6Z" fill="#c5c8ce" />
      </Ico>
    </div>
    <div className="flex flex-1 items-center bg-[#bdbec0]">
      <div className="ml-[6px] flex h-[18px] w-[19px] items-center justify-center rounded-[2px] border-2 border-[#8f96a3] bg-[#a4abb8]">
        <Ico w={12} h={10}>
          <path d="M1 1l4 4-4 4M6 9h5" stroke="#4a5262" strokeWidth="1.500" />
        </Ico>
      </div>
      <Caret w={7} h={4} fill="#55585c" className="ml-[4px]" />
      <T w={199} className="ml-[9px] pt-[2px] font-['DejaVu_Sans_Mono'] text-[18px] italic leading-[28px] text-[#77797c]">Escriba un comando</T>
      <Ico w={9} h={5} className="ml-auto mr-[7px]">
        <path d="M0 5l4.500-5L9 5Z" fill="#222" />
      </Ico>
    </div>
  </div>
);

const Canvas = () => (
  <main className="relative flex h-[782px] bg-[#212830]">
    <Drawing />
    <div className="flex w-[11px]">
      <div className="flex w-[7px] flex-col bg-[#b5cce8]">
        <div className="h-[90px] bg-gradient-to-b from-[#b0cbe9] to-[#dce7f5]" />
      </div>
      <div className="w-[1px] bg-[#2ce0f5]" />
      <div className="w-[3px] bg-black" />
    </div>
    <div className="absolute left-[2px] top-[5px] font-['Liberation_Sans'] text-[11.500px] leading-[18px] text-[#f2f2f2]">
      <T w={202}>[−][Superior][Estructura alámbrica 2D]</T>
    </div>
    <Ico w={52} h={12} className="absolute left-[1847px] top-[9px]">
      <path d="M1 8.500h10" stroke="#eee" strokeWidth="3" />
      <path d="M22 4.500h6v6h-6ZM23.500 2.500h6.500V9" stroke="#eee" strokeWidth="2" />
      <path d="M42 2l7 8M49 2l-7 8" stroke="#eee" strokeWidth="2.500" />
    </Ico>
    <Compass />
    <NavBar />
    <CommandBar />
  </main>
);

/* ---------- layout tabs and status bar ---------- */
const LayoutTab = ({ w, on, cls, children }) => (
  <div className={`relative flex h-[23px] items-center justify-center pb-[2px] ${cls} ${on ? "font-bold text-white" : "text-[#b4b4b4]"}`}>
    <svg width={w} height="23" viewBox={`0 0 ${w} 23`} className="absolute left-0 top-0 overflow-visible">
      <path d={`M-8 0C4 1 2 21 12 22.500H${w - 14}C${w - 4} 21 ${w - 4} 1 ${w + 6} 0Z`} fill={on ? "url(#tabDn)" : "url(#tabOff)"} stroke="#707070" strokeWidth=".7" />
    </svg>
    {children}
  </div>
);

const Group = ({ className, children }) => (
  <div className={`flex h-[32px] shrink-0 items-center border border-[#757575] bg-[#4f4f4f] ${className}`}>{children}</div>
);
const Cell = ({ className, children }) => <div className={`flex shrink-0 items-center justify-center ${className}`}>{children}</div>;
const SCaret = () => <Caret w={8} h={7} />;
const BL = "#2b8cf0";

const Ann = ({ c, extra }) => (
  <Ico w={20} h={20} className={c === BL ? "drop-shadow-[0_0_3px_#0a6be0]" : ""}>
    <path d="M8.500 0h3l1.500 10 7 9h-3.500L10 13l-6.500 6H0l7-9Z" fill={c} />
    {extra}
  </Ico>
);

const StatusBar = () => (
  <footer className="flex h-[35px] border-t border-[#5a5a5a] bg-[#383838] text-[14px] leading-[20px]">
    <div className="flex w-[1176px] items-start pl-[14px]">
      <LayoutTab w={84} cls="w-[84px]" on><T w={53} className="relative">Modelo</T></LayoutTab>
      <LayoutTab w={120} cls="w-[120px] pr-[3px]"><T w={91} className="relative">Presentación1</T></LayoutTab>
      <LayoutTab w={120} cls="w-[120px]"><T w={92} className="relative">Presentación2</T></LayoutTab>
      <Ico w={30} h={21} className="ml-[5px] mt-[1px]">
        <path d="M9 .5h20C28 12 25 17 18 20H1C1 10 3 2 9 .5Z" fill="#4c4c4c" stroke="#6a6a6a" />
        <path d="M15 5v9M10.500 9.500h9" stroke="#d8d8d8" strokeWidth="2.600" />
      </Ico>
    </div>
    <div className="flex w-[744px] gap-px border-b-[2px] border-[#4a4a4a] bg-[#4a4a4a] text-white">
      <Group className="w-[72px] justify-center"><T w={61}>MODELO</T></Group>
      <Group className="w-[81px]">
        <Cell className="w-[30px]">
          <Ico className="drop-shadow-[0_0_3px_#0a6be0]">
            <path d="M3 1v18M8 1v18M13 1v18M17.500 1v18M1 3h18M1 8h18M1 13h18M1 17.500h18" stroke={BL} strokeWidth="1.500" />
          </Ico>
        </Cell>
        <Cell className="w-[29px]">
          <Ico>
            <path d="M1 3h18M1 7.500h18M1 12h18M1 16.500h18" stroke="#bbb" strokeWidth="1.600" strokeDasharray="1.600 2" />
          </Ico>
        </Cell>
        <Cell className="w-[20px]"><SCaret /></Cell>
      </Group>
      <Group className="w-[129px]">
        <Cell className="w-[30px]">
          <Ico className="drop-shadow-[0_0_3px_#0a6be0]">
            <path d="M3 1v16.500h16M3 11h6v6" stroke={BL} strokeWidth="1.700" />
          </Ico>
        </Cell>
        <Cell className="w-[30px]">
          <Ico>
            <circle cx="9" cy="10" r="7.500" stroke="#c4c4c4" strokeWidth="1.500" />
            <path d="M9 10h10M9 10l6-6M13 4c2 1.500 3 3.500 3 6" stroke="#c4c4c4" strokeWidth="1.300" />
          </Ico>
        </Cell>
        <Cell className="w-[18px]"><SCaret /></Cell>
        <Cell className="w-[32px]">
          <Ico>
            <path d="M0 1l20 15" stroke="#c4c4c4" strokeWidth="1.300" />
            <path d="M10 0v20" stroke="#8a8a8a" strokeWidth="1.300" />
          </Ico>
        </Cell>
        <Cell className="w-[17px]"><SCaret /></Cell>
      </Group>
      <Group className="-ml-[2px] w-[82px]">
        <Cell className="w-[31px]">
          <Ico className="drop-shadow-[0_0_3px_#0a6be0]">
            <path d="M18 2 2 17.500h18" stroke={BL} strokeWidth="1.800" />
            <circle cx="9.500" cy="10.500" r="2.300" fill={BL} />
          </Ico>
        </Cell>
        <Cell className="w-[31px]">
          <Ico className="drop-shadow-[0_0_3px_#0a6be0]">
            <rect x="3" y="3" width="15" height="15" stroke={BL} strokeWidth="1.700" />
            <rect x="1" y="1" width="6" height="6" fill="#18d63a" stroke="#0a5a16" />
          </Ico>
        </Cell>
        <Cell className="w-[16px]"><SCaret /></Cell>
      </Group>
      <Group className="w-[133px]">
        <Cell className="w-[30px]"><Ann c={BL} extra={<circle cx="13.500" cy="5" r="3.500" fill="#3c4a5c" stroke={BL} strokeWidth="1.500" />} /></Cell>
        <Cell className="w-[30px]"><Ann c="#c4c4c4" extra={<path d="M17 0l-5 5h4l-3 5 6-6h-3.500Z" fill="#ddd" />} /></Cell>
        <Cell className="w-[29px]"><Ann c="#c4c4c4" /></Cell>
        <T w={16} className="ml-[6px]">1:1</T>
        <Cell className="w-[18px]"><SCaret /></Cell>
      </Group>
      <Group className="w-[50px]">
        <Cell className="w-[30px]">
          <Ico w={16} h={16}>
            <circle cx="8" cy="8" r="4.200" stroke="#c4c4c4" strokeWidth="3.200" />
            <circle cx="8" cy="8" r="7" stroke="#c4c4c4" strokeWidth="2.200" strokeDasharray="2.750 2.750" />
          </Ico>
        </Cell>
        <Cell className="w-[18px]"><SCaret /></Cell>
      </Group>
      <Group className="-ml-[2px] w-[33px] justify-center">
        <Ico w={18} h={18}><path d="M9 0v18M0 9h18" stroke="#ccc" strokeWidth="2" /></Ico>
      </Group>
      <Group className="w-[33px] justify-center">
        <Ico w={20} h={20} className="drop-shadow-[0_0_3px_#0a6be0]">
          <circle cx="10" cy="10" r="9" fill="#0d5fb5" stroke="#1c7be0" strokeWidth="1.500" />
          <path d="M9 12.500 14 8" stroke="#58a6f5" strokeWidth="1.400" />
        </Ico>
      </Group>
      <Group className="w-[64px]">
        <Cell className="w-[27px]">
          <Ico>
            <path d="M3 0h8l5 4v6H3Z" fill="#dfe8f5" />
            <path d="M11 0l5 4v6h-5Z" fill="#2c6fc4" />
            <circle cx="6.500" cy="4.500" r="2" stroke="#3c78c8" strokeWidth="1.300" />
            <path d="M2 8h14v4H2Z" fill="#3c78c8" />
            <path d="M2 11h14v6H2Z" fill="#f3cf4a" />
            <path d="M9 14l3.500 4L19 11" stroke="#2fb52f" strokeWidth="3" />
          </Ico>
        </Cell>
        <Cell className="w-[30px]">
          <Ico>
            <path d="M1 1h8v9H1ZM10 12l5 6H5Z" stroke="#bbb" strokeWidth="1.500" />
            <circle cx="15" cy="9" r="4" stroke="#bbb" strokeWidth="1.500" />
          </Ico>
        </Cell>
      </Group>
      <Group className="w-[62px]">
        <Cell className="w-[30px]">
          <Ico>
            <rect x="0" y="2.500" width="20" height="15" stroke="#ccc" strokeWidth="1.700" />
            <path d="M11 9l5-4.500M12 5h4v4M9 11l-5 4.500M4 11v4h4" stroke="#ccc" strokeWidth="1.800" />
          </Ico>
        </Cell>
        <Cell className="w-[30px]">
          <Ico w={20} h={16}><path d="M0 1.500h20M0 8h20M0 14.500h20" stroke="#ccc" strokeWidth="2.400" /></Ico>
        </Cell>
      </Group>
    </div>
  </footer>
);

/* ---------- Windows task bar ---------- */
const Taskbar = () => (
  <div className="flex h-[50px] bg-[linear-gradient(90deg,#d2d6df_0%,#d4d8e0_58%,#dcdcdc_63%,#d9d9de_72%,#e2d4e3_82%,#e3d2e4_90%,#e4dae6_100%)] text-[17.500px] leading-[26px] text-[#1b1b1b]">
    <div className="flex w-[60px] items-center justify-center">
      <Ico>
        <path d="M0 3l8-1.200v7.700H0ZM9 1.700 20 0v9.500H9ZM0 10.500h8v7.700L0 17ZM9 10.500h11V20L9 18.300Z" fill="#000" />
      </Ico>
    </div>
    <div className="my-[1px] flex w-[429px] items-center border border-[#c9c9ce] bg-white pl-[14px] text-[17px]">
      <Ico w={21} h={21}>
        <circle cx="13" cy="7.500" r="6.500" stroke="#111" strokeWidth="1.500" />
        <path d="M8.500 12.500.5 20.500" stroke="#111" strokeWidth="1.500" />
      </Ico>
      <T w={205} className="ml-[14px] pt-px">Escribe aquí para buscar</T>
    </div>
    <Cell className="w-[62px]">
      <Ico><circle cx="10" cy="10" r="8.300" stroke="#000" strokeWidth="2.700" /></Ico>
    </Cell>
    <Cell className="w-[58px]">
      <Ico>
        <path d="M.5 0v3.500h12V0M.5 20v-3.500h12V20M.5 6h12v8H.5ZM18.500 0v5M18.500 11v9" stroke="#000" strokeWidth="1.200" />
        <rect x="17" y="6" width="3" height="3" fill="#000" />
      </Ico>
    </Cell>
    <Cell className="w-[70px]">
      <Ico w={28} h={24}>
        <path d="M0 2a1 1 0 0 1 1-1h10l3 3v4H0Z" fill="#e0a214" />
        <path d="M0 4h27a1 1 0 0 1 1 1v17a1 1 0 0 1-1 1H1a1 1 0 0 1-1-1Z" fill="#ffd35f" />
        <path d="M5 24V14a1 1 0 0 1 1-1h16a1 1 0 0 1 1 1v10h-5v-5h-8v5Z" fill="#3a96dd" />
      </Ico>
    </Cell>
    <div className="ml-[2px] flex w-[51px] flex-col items-center">
      <div className="flex h-[47px] items-center pr-px pt-[3px]">
        <Ico w={28} h={28}>
          <circle cx="14" cy="14" r="13.800" fill="#db4437" />
          <path d="M14 14 7.500 17.500 2 7A13.800 13.800 0 0 0 12 27.600L19 17Z" fill="#0f9d58" />
          <path d="M14 8h12.400A13.800 13.800 0 0 1 12.500 27.700L20 17Z" fill="#ffcd40" />
          <circle cx="14" cy="14" r="6.300" fill="#f1f1f1" />
          <circle cx="14" cy="14" r="5" fill="#4285f4" />
        </Ico>
      </div>
      <div className="h-[3px] w-full bg-[#0078d7]" />
    </div>
    <div className="ml-[6px] flex w-[56px] flex-col bg-[#eceef3]">
      <div className="flex h-[47px] items-center justify-center pl-[3px] pt-[3px]">
        <div className="flex h-[30px] w-[30px] items-center justify-center bg-gradient-to-b from-[#e9e9ee] to-[#d9a3a8]">
          <LogoA w={19} h={21} />
        </div>
      </div>
      <div className="h-[3px] bg-[#0078d7]" />
    </div>
    <div className="ml-px flex w-[4px] flex-col justify-end bg-[#e4e6ec]"><div className="h-[3px] bg-[#4aa0e2]" /></div>
    <div className="ml-auto flex w-[557px] items-center">
      <Ico w={22} h={22}>
        <path d="M13 0c5 1 9 5.500 9 11.500C22 18 17 22 11 22 6 22 2 19.500 0 15.500 8 17 15 10 13 0Z" fill="url(#moon)" />
      </Ico>
      <T w={36} className="ml-[14px] pt-px">14°C</T>
      <T w={84} className="ml-[12px] pt-px">Despejado</T>
      <Ico w={16} h={9} className="ml-[21px]"><path d="M1 8.500 8 1.500l7 7" stroke="#111" strokeWidth="1.500" /></Ico>
      <Ico w={20} h={14} className="ml-[12px]">
        <path d="M5 13.300a4.300 4.300 0 0 1-.6-8.500A6 6 0 0 1 15 5a4.200 4.200 0 0 1 .5 8.300Z" fill="#f2f2f2" stroke="#222" strokeWidth="1.200" />
        <path d="M4.500 5a6 6 0 0 1 10.500 0l-4 3-6 5c-4-1-5-6-.5-8Z" fill="#777" />
      </Ico>
      <Ico w={18} h={18} className="ml-[12px]">
        <rect x="2" y="3.500" width="8" height="11" rx="1.500" stroke="#111" strokeWidth="1.400" />
        <path d="M10 8l4.500-3v8L10 10.500M2.500.5c3-1 5-1 7 0M2.500 17.500c3 1 5 1 7 0" stroke="#111" strokeWidth="1.300" />
      </Ico>
      <Ico w={21} h={18} className="ml-[9px]">
        <path d="M7 5.500h11.500v9H5V10M18.500 8h2v4h-2" stroke="#111" strokeWidth="1.400" />
        <path d="M.5 4h6v3l-2 2h-2l-2-2ZM2 1v3M5 1v3M3.500 9v6" stroke="#111" strokeWidth="1.300" />
      </Ico>
      <Ico w={18} h={18} className="ml-[12px]">
        <path d="M1.500 17C2 9 8 2 17 1.500" stroke="#888" strokeWidth="1.200" />
        <path d="M5 17c0-6 5-11 12-11.500M9 17c0-4 3.500-7.500 8-7.500" stroke="#111" strokeWidth="1.300" />
        <path d="M12.500 17c0-2 2-4 4-4" stroke="#111" strokeWidth="1.300" />
        <circle cx="15.500" cy="16" r="1.500" fill="#111" />
      </Ico>
      <Ico w={20} h={16} className="ml-[9px]">
        <path d="M1 5.500h3L8.500 1v14L4 10.500H1ZM11 5.500c1.500 1.500 1.500 3.500 0 5" stroke="#111" strokeWidth="1.300" />
        <path d="M13.500 3.500c3 2.500 3 6.500 0 9M16 1.500c4 3.500 4 9.500 0 13" stroke="#999" strokeWidth="1.200" />
      </Ico>
      <T w={24} className="ml-[16px] text-[14.500px]">ESP</T>
      <div className="ml-[19px] flex w-[68px] flex-col items-center text-[14.500px] leading-[22px]">
        <T w={26}>0:01</T>
        <T w={66}>17/7/2021</T>
      </div>
      <Ico w={30} h={32} className="ml-[23px] mt-[6px]">
        <path d="M0 0h20v15H12l-4 5v-5H0Z" fill="#000" />
        <path d="M4 4h12M4 7.500h12M4 11h8" stroke="#fff" strokeWidth="1.500" />
        <circle cx="19.500" cy="19.500" r="10" fill="#d9d3dc" stroke="#555" />
        <text x="19.500" y="25" fontSize="15" textAnchor="middle" fill="#111" fontFamily="Open Sans, sans-serif">1</text>
      </Ico>
      <span className="ml-auto mr-[5px] h-full w-px bg-[#b8b0bb]" />
    </div>
  </div>
);

export default function App() {
  return (
    <div className="relative flex h-[1080px] w-[1920px] flex-col overflow-hidden bg-[#383838] font-['Open_Sans','Noto_Sans',sans-serif]">
      <Defs />
      <TitleBar />
      <RibbonTabs />
      <Ribbon />
      <FileTabs />
      <Canvas />
      <StatusBar />
      <Taskbar />
      <div className="absolute left-0 top-0 flex h-[40px] w-[40px] items-center border border-black bg-gradient-to-b from-[#bdbdbd] to-[#7b7b7b] pl-[3px] pb-[6px]">
        <LogoA w={24} h={25} />
        <Caret w={7} h={4} fill="#333" className="ml-[3px] mt-[6px]" />
      </div>
    </div>
  );
}
